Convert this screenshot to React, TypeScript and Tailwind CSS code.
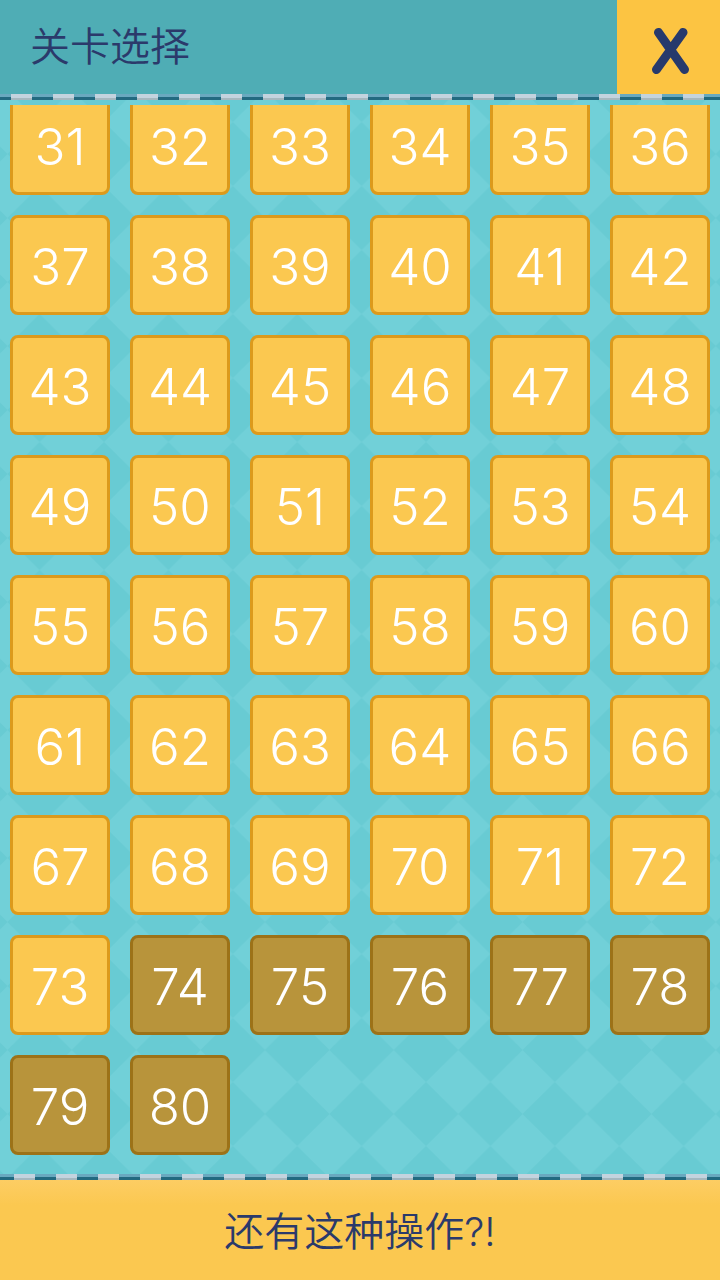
import clsx from 'clsx';

const FIRST_LEVEL = 31;
const LAST_LEVEL = 80;
const UNLOCKED_UP_TO = 73;

const levels = Array.from(
  { length: LAST_LEVEL - FIRST_LEVEL + 1 },
  (_, i) => FIRST_LEVEL + i,
);

const DiamondBackdrop = () => (
  <svg className="absolute inset-0 h-full w-full" aria-hidden="true">
    <defs>
      <pattern
        id="diamonds"
        x="39.6"
        y="26"
        width="64.4"
        height="64"
        patternUnits="userSpaceOnUse"
      >
        <rect width="65" height="64" fill="#68cbd3" />
        <path d="M32.2 0L64.4 32L32.2 64L0 32Z" fill="#71d0d8" />
      </pattern>
    </defs>
    <rect width="100%" height="100%" fill="url(#diamonds)" />
  </svg>
);

interface StitchProps {
  id: string;
  offset: number;
}

// Dashed seam between the bars and the level list
const Stitch = ({ id, offset }: StitchProps) => (
  <svg className="relative block h-[6px] w-full shrink-0" aria-hidden="true">
    <defs>
      <pattern id={id} x={offset} width="42" height="6" patternUnits="userSpaceOnUse">
        <rect width="21" height="4" fill="#c3d3de" />
        <rect y="4" width="21" height="2" fill="#a5b8bf" />
        <rect x="21" width="21" height="3" fill="#69a9bf" />
        <rect x="21" y="3" width="21" height="3" fill="#226a80" />
      </pattern>
    </defs>
    <rect width="100%" height="6" fill={`url(#${id})`} />
  </svg>
);

const LevelButton = ({ level }: { level: number }) => {
  const locked = level > UNLOCKED_UP_TO;

  return (
    <button
      type="button"
      disabled={locked}
      className={clsx(
        'flex aspect-square items-center justify-center rounded-lg border-3 pt-[3px] text-[51px] leading-none font-[350] text-white',
        locked
          ? 'border-[#9c7218] bg-[#b8943b]'
          : 'border-[#dc9a1c] bg-[#fbc850]',
      )}
    >
      {level}
    </button>
  );
};

export default function App() {
  return (
    <div className="relative flex h-dvh flex-col overflow-hidden bg-[#6ccdd5] font-['Inter','Noto_Sans_CJK_SC',sans-serif] text-[#2b3a6b]">
      <DiamondBackdrop />

      <header className="relative flex h-[94px] shrink-0 items-stretch justify-between bg-[#4fadb5]">
        <h1 className="flex items-center pl-[30px] text-[40px] leading-none font-[350]">
          关卡选择
        </h1>
        <button
          type="button"
          aria-label="关闭"
          className="flex w-[103px] items-center justify-center bg-[#fcc442] pt-2 pl-1"
        >
          <svg width="40" height="48" viewBox="0 0 40 48" aria-hidden="true">
            <path
              d="M7.5 5.5L33.5 42.5M32 5.5L5.5 42.5"
              fill="none"
              stroke="#273a6c"
              strokeWidth="9"
              strokeLinecap="round"
            />
          </svg>
        </button>
      </header>
      <Stitch id="stitch-top" offset={11} />

      {/* List is scrolled to its end, so the first row is cut off */}
      <main className="relative mt-[5px] flex min-h-0 flex-1 flex-col justify-end overflow-hidden px-[10px] pb-[19px]">
        <div className="grid grid-cols-6 gap-5">
          {levels.map((level) => (
            <LevelButton key={level} level={level} />
          ))}
        </div>
      </main>

      <Stitch id="stitch-bottom" offset={14} />
      <footer className="relative flex h-[100px] shrink-0 items-center justify-center bg-linear-to-b from-[#fdcd63] to-[#fbc850] to-25% pt-1">
        <p className="text-[40px] leading-none font-[350]">还有这种操作?!</p>
      </footer>
    </div>
  );
}
